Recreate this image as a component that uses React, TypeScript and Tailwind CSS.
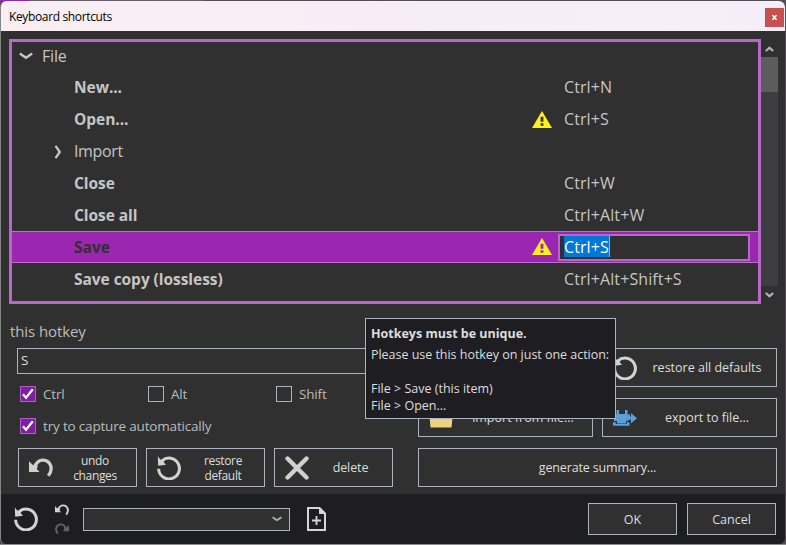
import type { ReactNode } from "react";

type HotkeyRow = { name: string; keys: string; warn?: boolean };

function Warning({ mark }: { mark: string }) {
  return (
    <svg className="mb-px h-[17px] w-5 shrink-0" viewBox="0 0 20 18" preserveAspectRatio="none">
      <path d="M10 0 20 18H0Z" fill="#fff21a" />
      <path d="M8.6 6h2.8v5.4H8.6zM8.6 13h2.8v2.6H8.6z" fill={mark} />
    </svg>
  );
}

function Restore({ className }: { className: string }) {
  return (
    <svg className={className} viewBox="0 0 24 24" fill="none">
      <path d="M1.6 12.800A10.4 10.4 0 1 0 5 4.800" stroke="#d2d2d2" strokeWidth="3" />
      <path d="M.8 .6 1.200 9.800 9 8.700 6.500 6 7.500 4 3.600 3.800Z" fill="#d2d2d2" />
    </svg>
  );
}

function Undo({ className }: { className: string }) {
  return (
    <svg className={className} viewBox="0 0 24 20" fill="none">
      <path d="M5.500 9C7.500 4.200 11 1.900 14.200 2.100c7 .4 11 8.400 5 15.700" stroke="currentColor" strokeWidth="3.300" />
      <path d="M0 3.200V14h10.500L7.800 11 9 7.800 3.600 6.800Z" fill="currentColor" />
    </svg>
  );
}

function Chevron({ className }: { className: string }) {
  return (
    <svg className={className} viewBox="0 0 14 8" fill="none">
      <path d="m.8 1.500 6.200 4.300 6.200-4.300" stroke="currentColor" strokeWidth="2.300" />
    </svg>
  );
}

function SmallChevron({ className = "" }: { className?: string }) {
  return (
    <svg className={`h-[6px] w-[9px] ${className}`} viewBox="0 0 9 6" fill="none">
      <path d="m.8 1 3.700 3.200L8.200 1" stroke="currentColor" strokeWidth="2.200" />
    </svg>
  );
}

function Row({ name, keys, warn }: HotkeyRow) {
  return (
    <div className="flex h-8 items-center pl-[62px]">
      <span className="w-[458px] text-[15.500px] font-bold tracking-[-0.050px] whitespace-nowrap">{name}</span>
      <span className="flex w-8">{warn && <Warning mark="#303030" />}</span>
      <span className="pb-0.5 text-[16px] tracking-[0.1px] whitespace-nowrap">{keys}</span>
    </div>
  );
}

function Check({ label, on, className = "" }: { label: string; on?: boolean; className?: string }) {
  return (
    <div className={`flex h-4 items-center gap-[7px] ${className}`}>
      <span className={`flex size-4 shrink-0 items-center justify-center border ${on ? "border-[#b35cc4] bg-[#7d1fa2]" : "border-[#abb4c0]"}`}>
        {on && (
          <svg className="size-3" viewBox="0 0 12 12" fill="none">
            <path d="m1 6.300 3 3.400L10.800 1.300" stroke="white" strokeWidth="2.200" />
          </svg>
        )}
      </span>
      <span className="pt-px text-[13.500px] tracking-[-0.180px] whitespace-nowrap text-[#bcbcbc]">{label}</span>
    </div>
  );
}

function Button({ icon, children, className }: { icon?: ReactNode; children: ReactNode; className: string }) {
  return (
    <button className={`flex items-center border border-[#abb4c0] bg-[#303030] text-[12.500px] text-[#dedede] ${className}`}>
      {icon}
      <span className="grow pt-0.5 text-center whitespace-nowrap">{children}</span>
    </button>
  );
}

function TwoLines({ first, second }: { first: string; second: string }) {
  return (
    <span className="-mt-0.5 flex flex-col pl-px text-[12px] leading-[15px] tracking-[-0.350px]">
      <span>{first}</span>
      <span>{second}</span>
    </span>
  );
}

export default function App() {
  return (
    <div className="h-[545px] w-[786px] overflow-hidden bg-[#525055] font-['Open_Sans','Noto_Sans',sans-serif]">
      <div className="flex h-full flex-col">
        <div className="flex h-px shrink-0">
          <div className="w-[29px] bg-[#9026ab]" />
          <div className="w-[175px] bg-[#66606b]" />
        </div>
        <div className="mr-px flex h-[543px] flex-col overflow-hidden rounded-md border-l border-[#858585] bg-[#303030]">
          <header className="flex h-[30px] shrink-0 items-center justify-between bg-linear-to-r from-[#f9eff2] via-[#f8edf7] to-[#f5eef8] pr-px pl-2">
            <span className="pt-px text-[12px] tracking-[-0.360px] text-black">Keyboard shortcuts</span>
            <button className="mt-[3px] flex h-[19px] w-[19px] items-center justify-center bg-[#c75050]">
              <svg className="h-[5px] w-[5px]" viewBox="0 0 5 5">
                <path d="m.3 0 4.400 5M4.700 0 .3 5" stroke="white" strokeWidth="1.600" />
              </svg>
            </button>
          </header>

          <main className="flex h-[463px] shrink-0 flex-col pt-2 pl-2">
            <div className="flex h-[265px] shrink-0">
              <div className="w-[752px] overflow-hidden border-[3px] border-[#b868c8] text-[#c5c5c5]">
                <div className="-mt-0.5">
                  <div className="flex h-8 items-center gap-[9px] pl-[7px] text-[16px] tracking-[-0.200px]">
                    <Chevron className="h-2 w-3.5" />
                    <span className="pb-px">File</span>
                  </div>
                  <Row name="New..." keys="Ctrl+N" />
                  <Row name="Open..." keys="Ctrl+S" warn />
                  <div className="flex h-8 items-center pl-[39px] text-[16px] tracking-[-0.350px]">
                    <Chevron className="h-2 w-3.5 -rotate-90" />
                    <span className="pb-0.5 pl-[9px]">Import</span>
                  </div>
                  <Row name="Close" keys="Ctrl+W" />
                  <Row name="Close all" keys="Ctrl+Alt+W" />
                  <div className="-mt-px mb-px flex h-8 items-center border-y border-[#c06bcd] bg-[#9b27b0] pl-[62px]">
                    <span className="w-[458px] pt-0.5 text-[15.500px] font-bold text-[#303030]">Save</span>
                    <span className="flex w-[26px]"><Warning mark="#9b27b0" /></span>
                    <span className="mt-px flex h-[27px] w-[192px] items-start border-2 border-[#b868c8] bg-[#303030] pl-1">
                      <span className="flex h-[21px] items-center border-r border-[#ff9630] bg-[#0078d7] text-[16px] tracking-[0.1px] text-white">Ctrl+S</span>
                    </span>
                  </div>
                  <Row name="Save copy (lossless)" keys="Ctrl+Alt+Shift+S" />
                </div>
              </div>
              <div className="flex w-[17px] flex-col items-center text-[#abb4c0]">
                <div className="flex h-[18px] items-center pt-px"><SmallChevron className="rotate-180" /></div>
                <div className="h-[35px] w-full bg-[#5c5c5c]" />
                <div className="h-[194px] w-full bg-[#3e3d42]" />
                <div className="flex h-[18px] items-center"><SmallChevron /></div>
              </div>
            </div>

            <div className="flex pt-[15px]">
              <section className="w-[409px]">
                <div className="flex h-[25px] items-center pl-px text-[15px] tracking-[-0.1px] text-[#bcbcbc]">this hotkey</div>
                <div className="mt-[4px] ml-2 flex h-[26px] w-[376px] items-center border border-[#abb4c0] pb-0.5 pl-[3px] text-[13.500px] text-[#dedede]">S</div>
                <div className="mt-3 ml-[11px] flex">
                  <Check label="Ctrl" on className="w-32" />
                  <Check label="Alt" className="w-32" />
                  <Check label="Shift" />
                </div>
                <Check label="try to capture automatically" on className="mt-4 ml-[11px]" />
                <div className="mt-3.5 ml-[9px] flex gap-[9px]">
                  <Button className="h-[39px] w-[119px] pl-2.5" icon={<Undo className="h-5 w-6 text-[#d0d0d0]" />}>
                    <TwoLines first="undo" second="changes" />
                  </Button>
                  <Button className="h-[39px] w-[119px] pl-2.5" icon={<Restore className="size-6" />}>
                    <TwoLines first="restore" second="default" />
                  </Button>
                  <Button
                    className="h-[39px] w-[119px] pl-2.5 tracking-[-0.1px]"
                    icon={
                      <svg className="size-6" viewBox="0 0 24 24">
                        <path d="m2.500 2.500 19 19m0-19-19 19" stroke="#d0d0d0" strokeWidth="4.400" strokeLinecap="round" />
                      </svg>
                    }
                  >delete</Button>
                </div>
              </section>

              <section className="grid h-[139px] w-[359px] grid-cols-2 content-start gap-x-[9px] gap-y-[11px] pt-[29px]">
                <Button className="col-start-2 h-[39px] pl-[11px]" icon={<Restore className="-ml-px mr-px size-6" />}>restore all defaults</Button>
                <Button
                  className="col-start-1 h-[39px] pl-[11px]"
                  icon={
                    <svg className="-ml-px mr-px size-6" viewBox="0 0 24 24">
                      <path d="M0 4h8l2 3h14l-1.500 14.500h-21z" fill="#efd080" />
                    </svg>
                  }
                >import from file...</Button>
                <Button
                  className="h-[39px] pl-[11px]"
                  icon={
                    <svg className="-ml-px mr-px size-6" viewBox="0 0 24 24">
                      <path d="M3.500 4v4.500H1V15h3v2.500h9V15h2.500v-1H13V11h4V8.500h-2.500V4H12v4H6V4Z" fill="#5b9fdc" />
                      <path d="M12.500 10.700H18V7l6 5.300-6 5.300v-3.800h-5.500Z" fill="#5b9fdc" />
                      <path d="M0 16.300h2.700v1.700h11.100v-1.700h2.700v3.500H0Z" fill="#5b9fdc" />
                    </svg>
                  }
                >export to file...</Button>
                <Button className="col-span-2 h-[39px] tracking-[-0.150px]">generate summary...</Button>
              </section>
            </div>
          </main>

          <footer className="flex h-[50px] shrink-0 items-center bg-[#1e1d22] pl-[13px]">
            <Restore className="size-6" />
            <div className="ml-[17px] flex flex-col gap-[7px]">
              <Undo className="h-3 w-3.5 text-[#d0d0d0]" />
              <Undo className="h-3 w-3.5 -scale-x-100 text-[#626165]" />
            </div>
            <div className="ml-[14px] flex h-[23px] w-[207px] items-center justify-end border border-[#abb4c0] bg-[#303030] pr-[7px] text-[#abb4c0]">
              <Chevron className="h-[6px] w-2.5" />
            </div>
            <svg className="ml-[17px] h-6 w-[19px]" viewBox="0 0 19 24" fill="none">
              <path d="M1 1h11.500L18 6.500V23H1z" stroke="#d6d6d6" strokeWidth="2" />
              <path d="M12 1v6h6z" fill="#d6d6d6" />
              <path d="M9.500 9v9M5 13.500h9" stroke="#d6d6d6" strokeWidth="1.800" />
            </svg>
            <div className="ml-auto flex gap-2.5 pr-[9px]">
              <Button className="h-8 w-[89px]">OK</Button>
              <Button className="h-8 w-[89px]">Cancel</Button>
            </div>
          </footer>
        </div>
        <div className="h-px shrink-0 bg-[#8c8c8c]" />
      </div>

      <div className="absolute top-[318px] left-[365px] h-[101px] w-[251px] border border-[#abb4c0] bg-[#1e1d22] pt-[6px] pl-[5px] text-[12.500px] leading-[17px] whitespace-nowrap text-[#dedede]">
        <div className="mb-1 font-bold">Hotkeys must be unique.</div>
        <div className="tracking-[-0.030px]">Please use this hotkey on just one action:</div>
        <div className="mt-[17px]">File &gt; Save (this item)</div>
        <div>File &gt; Open...</div>
      </div>
    </div>
  );
}
